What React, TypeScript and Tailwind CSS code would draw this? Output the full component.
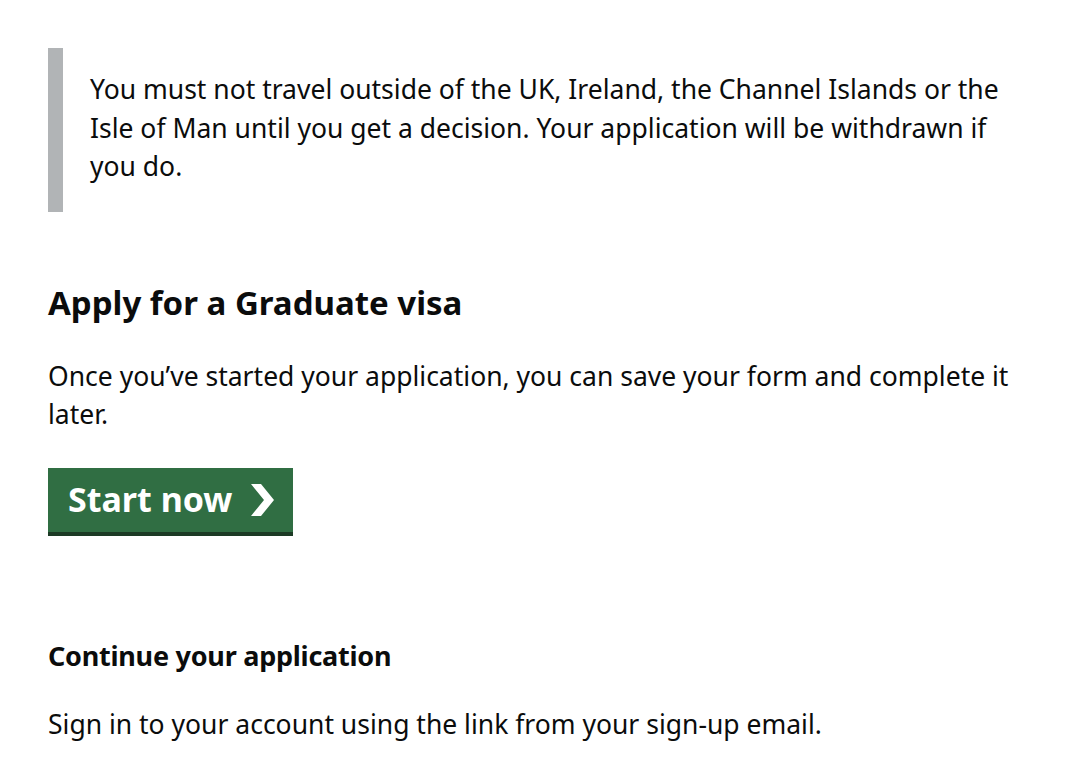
import React from 'react'

function Chevron() {
  return (
    <svg width="23" height="32" viewBox="0 0 23 32" aria-hidden="true" className="shrink-0">
      <path d="M0 0h10l13 16-13 16H0l13-16z" fill="currentColor" />
    </svg>
  )
}

export default function App() {
  return (
    <div
      className="min-h-[776px] w-[1080px] bg-white px-12 pt-12 text-[#0b0c0c]"
      style={{ fontFamily: '"Noto Sans", Arial, sans-serif' }}
    >
      <div className="border-l-[15px] border-[#b1b4b6] pt-[22px] pb-[26px] pl-[27px]">
        <p className="text-[26.5px] leading-[38.5px]">
          You must not travel outside of the UK, Ireland, the Channel Islands or the Isle of Man until you get a
          decision. Your application will be withdrawn if you do.
        </p>
      </div>

      <h2 className="mt-[69px] text-[33px] font-bold leading-[44px]">Apply for a Graduate visa</h2>
      <p className="mt-[32px] text-[26.5px] leading-[38.5px]">
        Once you’ve started your application, you can save your form and complete it later.
      </p>

      <button className="mt-[34px] flex h-[64px] items-center gap-[19px] bg-[#306e43] pl-[20px] pr-[19px] text-[34px] font-bold text-white shadow-[0_4px_0_#1c3a25]">
        <span>Start now</span>
        <Chevron />
      </button>

      <h3 className="mt-[104px] text-[27px] font-bold leading-[40px] tracking-[-0.25px]">Continue your application</h3>
      <p className="mt-[29px] text-[26.5px] leading-[38.5px]">
        Sign in to your account using the link from your sign-up email.
      </p>
    </div>
  )
}
